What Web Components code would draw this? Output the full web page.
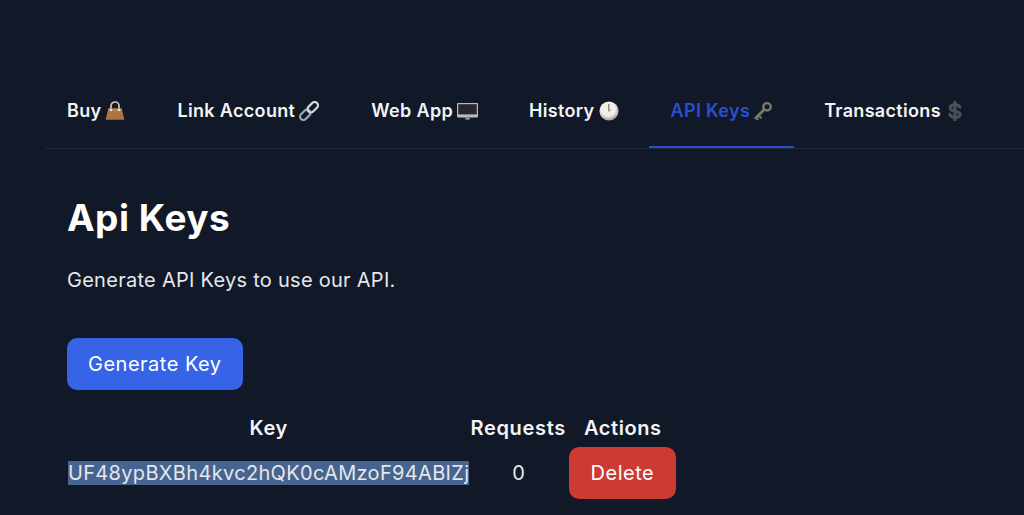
<!DOCTYPE html>
<html lang="en">
<head>
<meta charset="utf-8">
<title>Api Keys</title>
<style>
	html, body { margin: 0; height: 100%; background: #111827; overflow: hidden; }
	body { font-family: Inter, "Noto Sans", sans-serif; color: #fff; box-sizing: border-box; padding-top: 84px; }
</style>
</head>
<body>
<template id="icon-bag"><svg viewBox="0 0 20 20" width="20" height="20"><path d="M6 8.500V5a4 4 0 0 1 8 0v3.500" fill="none" stroke="#d8c8b4" stroke-width="1.700"/><path d="M3.400 7.500h13.200l2.600 10.200a.9.900 0 0 1-.9 1.100H1.700a.9.900 0 0 1-.9-1.100z" fill="#ad7344"/><path d="M3.400 7.500h13.200l.5 2H2.900z" fill="#c08a5a"/><circle cx="6" cy="9" r="1.300" fill="#e6dccd"/><circle cx="14" cy="9" r="1.300" fill="#e6dccd"/></svg></template>
<template id="icon-link"><svg viewBox="0 0 20 20" width="20" height="20"><g fill="none"><rect x="-6" y="-3.300" width="12" height="6.600" rx="3.300" transform="translate(6.300 13.700) rotate(-45)" stroke="#9fa7b0" stroke-width="2.200"/><rect x="-6" y="-3.300" width="12" height="6.600" rx="3.300" transform="translate(13.700 6.300) rotate(-45)" stroke="#d6dade" stroke-width="2.200"/></g></svg></template>
<template id="icon-desktop"><svg viewBox="0 0 21 20" width="21" height="20" style="margin-right:-1px"><rect x="0" y="2" width="21" height="14.500" rx="1" fill="#b9bcbf"/><rect x="1.200" y="3.200" width="18.600" height="10.200" fill="#26282b"/><rect x="8.300" y="16.500" width="4.400" height="2.200" fill="#8d9195"/></svg></template>
<template id="icon-clock"><svg viewBox="0 0 20 20" width="20" height="20"><defs><radialGradient id="c" cx=".45" cy=".38" r=".68"><stop offset=".55" stop-color="#f1eee8"/><stop offset="1" stop-color="#8f887e"/></radialGradient></defs><circle cx="10" cy="10" r="9.600" fill="url(#c)"/><path d="M9.800 9.800V3.600" stroke="#77736d" stroke-width="1.200" stroke-linecap="round"/><path d="M9.800 9.800l1.800-.8" stroke="#a09b93" stroke-width="1" stroke-linecap="round"/></svg></template>
<template id="icon-key"><svg viewBox="0 0 20 20" width="20" height="20" style="margin:0 -1px"><g fill="none" stroke="#7d766c" stroke-linecap="round"><circle cx="14" cy="5.800" r="3.700" stroke-width="2.400"/><path d="M11.200 8.600 2.800 17" stroke-width="2.800"/><path d="M5.800 14.600l2.200 2.200M3.400 16.800l1.400 1.400" stroke-width="2"/></g></svg></template>
<template id="icon-dollar"><svg viewBox="0 0 20 20" width="20" height="20"><path d="M15 6.300C14.300 4.500 12.400 3.800 10 3.800c-2.900 0-4.800 1.300-4.800 3.200 0 4.400 10 2 10 6.200 0 2-2.200 3.100-5.200 3.100-2.800 0-4.700-1-5.300-2.900M10 1.200v17.600" fill="none" stroke="#4b5056" stroke-width="3.100" stroke-linecap="round"/></svg></template>

<template id="tab-item">
	<style>
		:host { display: block; flex: none; }
		.tab {
			display: flex; align-items: center; gap: 4px;
			box-sizing: border-box; height: 64px; padding: 0 22px 10px;
			font: 600 18px/1 Inter, sans-serif; letter-spacing: .33px; color: #f3f4f6;
			white-space: nowrap;
		}
		:host([active]) .tab { color: #2a4fd0; box-shadow: inset 0 -2px 0 #2a4fd0; }
		svg { display: block; }
	</style>
	<div class="tab"><slot></slot><span id="ic"></span></div>
</template>

<template id="tab-bar">
	<style>
		:host { display: flex; gap: 8px; margin-left: 45px; height: 65px; border-bottom: 1px solid #1f2937; box-sizing: border-box; }
	</style>
	<slot></slot>
</template>

<template id="app-button">
	<style>
		:host { display: inline-block; }
		button {
			display: block; border: 0; border-radius: 10px; color: #fff;
			font: 400 20px/28px Inter, sans-serif; letter-spacing: .5px; padding: 12px 21px;
			background: #3763e7;
		}
		:host([variant="danger"]) button { background: #cc3a31; padding: 12px 21.5px; }
	</style>
	<button type="button"><slot></slot></button>
</template>

<template id="keys-page">
	<style>
		:host { display: block; padding: 0 0 0 67px; }
		h1 { margin: 0; font: 700 37px/40px Inter, sans-serif; letter-spacing: .5px; color: #fff; padding-top: 49px; }
		p { margin: 0; padding-top: 28px; font: 400 20px/28px Inter, sans-serif; letter-spacing: .27px; color: #e5e7eb; }
		.actions { padding-top: 44px; }
	</style>
	<h1>Api Keys</h1>
	<p>Generate API Keys to use our API.</p>
	<div class="actions"><app-button>Generate Key</app-button></div>
	<slot></slot>
</template>

<template id="keys-table">
	<style>
		:host { display: block; padding-top: 20px; margin-left: -1px; }
		table { border-collapse: collapse; font-family: Inter, sans-serif; font-size: 20px; line-height: 28px; }
		th { font-weight: 600; padding: 4px 1px 5px; color: #f3f4f6; letter-spacing: .58px; }
		th.key { padding-left: 3px; }
		td { padding: 0 1px; text-align: center; color: #e5e7eb; height: 52px; letter-spacing: .3px; }
		td.key { padding: 0 0 0 2px; letter-spacing: .33px; }
		td.num { padding-left: 2px; }
		.sel { background: #46648f; color: #e5e7eb; }
		th.req { letter-spacing: .7px; }
		th.act { padding-left: 3px; padding-right: 0; }
		td.act { padding-left: 2px; padding-right: 0; }
		app-button { vertical-align: middle; }
	</style>
	<table>
		<thead><tr><th class="key">Key</th><th class="req">Requests</th><th class="act">Actions</th></tr></thead>
		<tbody><tr>
			<td class="key"><span class="sel">UF48ypBXBh4kvc2hQK0cAMzoF94ABIZj</span></td>
			<td class="num">0</td>
			<td class="act"><app-button variant="danger">Delete</app-button></td>
		</tr></tbody>
	</table>
</template>

<tab-bar>
	<tab-item icon="bag">Buy</tab-item>
	<tab-item icon="link">Link Account</tab-item>
	<tab-item icon="desktop">Web App</tab-item>
	<tab-item icon="clock">History</tab-item>
	<tab-item icon="key" active>API Keys</tab-item>
	<tab-item icon="dollar">Transactions</tab-item>
</tab-bar>
<keys-page><keys-table></keys-table></keys-page>

<script>
	function stamp(el, id) {
		const shadow = el.attachShadow({ mode: 'open' });
		shadow.appendChild(document.getElementById(id).content.cloneNode(true));
		return shadow;
	}

	class TabItem extends HTMLElement {
		connectedCallback() {
			if (this.shadowRoot) return;
			const shadow = stamp(this, 'tab-item');
			const icon = document.getElementById('icon-' + this.getAttribute('icon'));
			shadow.getElementById('ic').appendChild(icon.content.cloneNode(true));
		}
	}

	// the rest only stamp their template
	const plain = { 'tab-bar': 'tab-bar', 'app-button': 'app-button', 'keys-page': 'keys-page', 'keys-table': 'keys-table' };
	for (const [name, id] of Object.entries(plain)) {
		customElements.define(name, class extends HTMLElement {
			connectedCallback() {
				if (!this.shadowRoot) stamp(this, id);
			}
		});
	}
	customElements.define('tab-item', TabItem);
</script>
</body>
</html>
